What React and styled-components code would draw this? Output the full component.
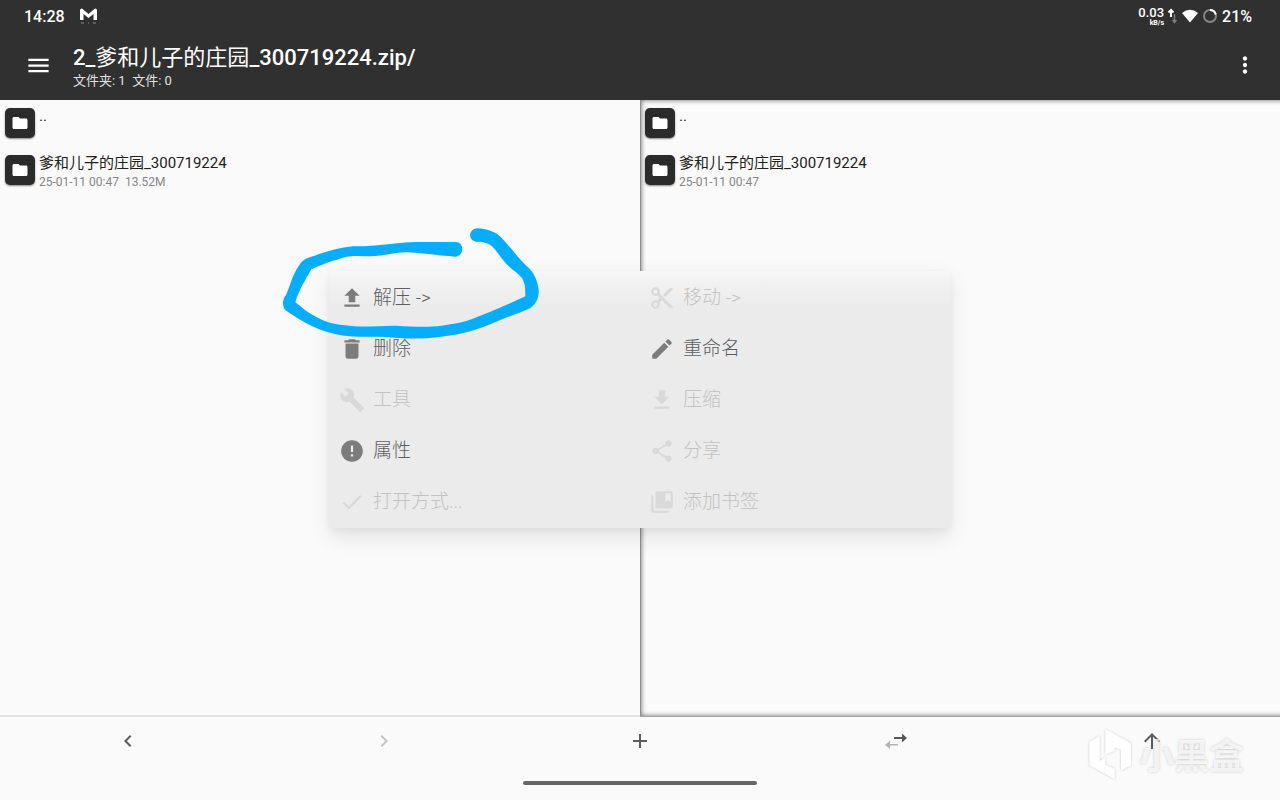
import React from "react";
import styled, { createGlobalStyle } from "styled-components";
import {
  MdAdd,
  MdArrowUpward,
  MdBuild,
  MdCheck,
  MdChevronLeft,
  MdChevronRight,
  MdCollectionsBookmark,
  MdContentCut,
  MdDelete,
  MdEdit,
  MdError,
  MdFolder,
  MdMenu,
  MdMoreVert,
  MdShare,
} from "react-icons/md";

const GlobalStyle = createGlobalStyle`
  *, *::before, *::after { box-sizing: border-box; }
  body {
    margin: 0;
    background: #fafafa;
    font-family: Roboto, "Noto Sans CJK SC", sans-serif;
  }
  button {
    margin: 0;
    padding: 0;
    border: 0;
    background: none;
    color: inherit;
    font: inherit;
    text-align: left;
  }
  svg { display: block; flex: none; }
`;

const Screen = styled.div`
  position: relative;
  display: flex;
  flex-direction: column;
  min-height: 100vh;
  overflow: hidden;
`;

const Header = styled.header`
  background: #303030;
  color: #fff;
`;

const StatusBar = styled.div`
  display: flex;
  align-items: center;
  height: 32px;
  padding: 0 28px 0 24px;
  font-size: 16px;
  font-weight: 500;
`;

const StatusLeft = styled.div`
  display: flex;
  align-items: center;
  gap: 15px;
  flex: 1;
`;

const StatusRight = styled.div`
  display: flex;
  align-items: center;
  gap: 5px;
`;

const Speed = styled.div`
  display: flex;
  align-items: center;
  gap: 3px;
`;

const SpeedText = styled.div`
  display: flex;
  flex-direction: column;
  align-items: flex-end;
  padding-top: 1px;
  font-size: 13px;
  line-height: 12px;
`;

const SpeedUnit = styled.span`
  font-size: 7px;
  line-height: 8px;
  font-weight: 700;
`;

const Toolbar = styled.div`
  display: flex;
  align-items: center;
  height: 68px;
  padding: 0 22px 2px 25px;
`;

const IconButton = styled.button`
  display: grid;
  place-items: center;
`;

const Heading = styled.div`
  flex: 1;
  min-width: 0;
  padding: 4px 0 0 21px;
`;

const Title = styled.h1`
  margin: 0;
  font-size: 22px;
  line-height: 28px;
  font-weight: 400;
  white-space: nowrap;
`;

const Latin = styled.span`
  font-weight: 500;
`;

const Subtitle = styled.p`
  margin: 0;
  font-size: 13px;
  line-height: 18px;
  color: #e0e0e0;
  white-space: pre;
`;

const Panes = styled.main`
  flex: 1;
  display: grid;
  grid-template-columns: 1fr 1fr;
`;

const Pane = styled.ul`
  margin: 0;
  padding: 0;
  list-style: none;
  background: #fafafa;
  border-bottom: 2px solid #e2e2e2;
`;

const ActivePane = styled(Pane)`
  position: relative;
  border-bottom: 1px solid #a2a2a2;
  overflow: hidden;

  &::after {
    content: "";
    position: absolute;
    inset: 0 -8px 0 0;
    border-left: 1px solid #8e8e8e;
    box-shadow: inset 0 0 5px rgba(0, 0, 0, 0.6);
    pointer-events: none;
  }
`;

const FileRow = styled.button`
  display: flex;
  gap: 4px;
  width: 100%;
  height: 47px;
  padding: 5px 0 0 5px;
`;

const FolderBadge = styled.span`
  display: grid;
  place-items: center;
  flex: none;
  width: 30px;
  height: 30px;
  margin-top: 3px;
  border-radius: 5px;
  background: #2b2b2b;
  color: #fff;
  box-shadow: 0 1px 2px rgba(0, 0, 0, 0.45);
`;

const FileText = styled.span`
  display: flex;
  flex-direction: column;
  color: #212121;
  font-size: 15px;
  line-height: 22px;
`;

const FileMeta = styled.span`
  color: #858585;
  font-size: 12px;
  line-height: 16px;
  white-space: pre;
`;

const Footer = styled.footer`
  height: 83px;
`;

const NavBar = styled.nav`
  display: grid;
  grid-template-columns: repeat(5, 1fr);
  height: 48px;
`;

const NavButton = styled(IconButton)`
  color: ${(p) => (p.disabled ? "#c4c4c4" : "#5c5c5c")};
`;

const HomeHandle = styled.div`
  width: 234px;
  height: 4px;
  margin: 16px auto 0;
  border-radius: 2px;
  background: #666;
`;

const Overlay = styled.div`
  position: absolute;
  inset: 0;
  display: grid;
  place-items: center;
  padding-bottom: 2px;
  pointer-events: none;
`;

const Menu = styled.div`
  position: relative;
  display: grid;
  grid-template-columns: 1fr 1fr;
  grid-auto-rows: 51px;
  width: 620px;
  padding-top: 2px;
  background: linear-gradient(#f7f7f7, #f1f1f1 14px, #ebebeb 36px);
  box-shadow: 0 8px 20px rgba(0, 0, 0, 0.1), 0 3px 8px rgba(0, 0, 0, 0.04);
  pointer-events: auto;
`;

const MenuItem = styled.button`
  display: flex;
  align-items: center;
  gap: 8px;
  padding-left: 9px;
  font-size: 19px;
  line-height: 24px;
  font-weight: 300;
  color: ${(p) => (p.disabled ? "#c2c2c2" : "#5e5e5e")};

  svg {
    color: ${(p) => (p.disabled ? "#d9d9d9" : "#7c7c7c")};
  }
`;

const Scribble = styled.svg`
  position: absolute;
  left: -60px;
  top: -51px;
  pointer-events: none;
`;

const Watermark = styled.div`
  position: absolute;
  right: 36px;
  bottom: 20px;
  display: flex;
  align-items: center;
  gap: 7px;
  color: rgba(255, 255, 255, 0.75);
  font-family: "Noto Sans CJK SC", sans-serif;
  font-size: 35px;
  line-height: 50px;
  font-weight: 700;
  text-shadow: 0 0 3px rgba(0, 0, 0, 0.2);
  pointer-events: none;

  svg { filter: drop-shadow(0 0 1px rgba(0, 0, 0, 0.2)); }
`;

const UploadIcon = () => (
  <svg width="26" height="26" viewBox="0 0 24 24" fill="currentColor">
    <path d="M9 16h6v-6h4l-7-7-7 7h4zM5 18h14v2H5z" />
  </svg>
);

const DownloadIcon = () => (
  <svg width="26" height="26" viewBox="0 0 24 24" fill="currentColor">
    <path d="M19 9h-4V3H9v6H5l7 7 7-7zM5 18v2h14v-2H5z" />
  </svg>
);

const SwapIcon = () => (
  <svg width="22" height="16" viewBox="0 0 22 16">
    <path d="M9 4h8V0.500l5 4.500-5 4.500V6H9z" fill="#555" />
    <path d="M13 11H5V7.500L0 12l5 4v-3.500h8z" fill="#b4b4b4" />
  </svg>
);

const MailIcon = () => (
  <svg width="17" height="16" viewBox="0 0 17 16">
    <path d="M0 12V2Q0 0.500 2 0.500L8.500 6 15 0.500Q17 0.500 17 2V12H13.500V6L8.500 10 3.500 6V12Z" fill="#fff" />
    <path d="M1 15h3M8 15h1M13 15h3" stroke="#8c8c8c" />
  </svg>
);

const TrafficIcon = () => (
  <svg width="10" height="16" viewBox="0 0 10 16" fill="none" strokeWidth="1.500">
    <path d="M4 9V2M1.500 4.500L4 2l2.500 2.500" stroke="#fff" strokeWidth="2" />
    <path d="M7.500 6v8M5.500 12l2 2.500 2-2.500" stroke="#7d7d7d" />
  </svg>
);

const WifiIcon = () => (
  <svg width="16" height="14" viewBox="0 0 16 14">
    <path d="M8 13.500L0 4Q8-2.500 16 4Z" fill="#fff" />
  </svg>
);

const BatteryRing = () => (
  <svg width="14" height="14" viewBox="0 0 14 14" fill="none" strokeWidth="2">
    <circle cx="7" cy="7" r="6" stroke="#858585" />
    <path d="M7 1A6 6 0 0 1 12.800 5.500" stroke="#fff" />
  </svg>
);

const BrandMark = () => (
  <svg width="44" height="52" viewBox="0 0 132 156" fill="#fff">
    <path d="M4 42L35 24V98L52 90V110L80 123V154L4 112Z" />
    <path d="M52 3L129 46V112L99 128V66L80 58V68L52 80Z" />
  </svg>
);

const files = {
  left: [{ name: ".." }, { name: "爹和儿子的庄园_300719224", meta: "25-01-11 00:47  13.52M" }],
  right: [{ name: ".." }, { name: "爹和儿子的庄园_300719224", meta: "25-01-11 00:47" }],
};

const menuItems = [
  { label: "解压 ->", icon: <UploadIcon /> },
  { label: "移动 ->", icon: <MdContentCut size={26} />, disabled: true },
  { label: "删除", icon: <MdDelete size={26} /> },
  { label: "重命名", icon: <MdEdit size={26} /> },
  { label: "工具", icon: <MdBuild size={26} />, disabled: true },
  { label: "压缩", icon: <DownloadIcon />, disabled: true },
  { label: "属性", icon: <MdError size={26} /> },
  { label: "分享", icon: <MdShare size={26} />, disabled: true },
  { label: "打开方式...", icon: <MdCheck size={26} />, disabled: true },
  { label: "添加书签", icon: <MdCollectionsBookmark size={26} />, disabled: true },
];

const FileRows = ({ items }) =>
  items.map((file) => (
    <li key={file.name}>
      <FileRow type="button">
        <FolderBadge>
          <MdFolder size={18} />
        </FolderBadge>
        <FileText>
          {file.name}
          {file.meta && <FileMeta>{file.meta}</FileMeta>}
        </FileText>
      </FileRow>
    </li>
  ));

export default function App() {
  return (
    <Screen>
      <GlobalStyle />
      <Header>
        <StatusBar>
          <StatusLeft>
            14:28
            <MailIcon />
          </StatusLeft>
          <StatusRight>
            <Speed>
              <SpeedText>
                0.03
                <SpeedUnit>kB/s</SpeedUnit>
              </SpeedText>
              <TrafficIcon />
            </Speed>
            <WifiIcon />
            <BatteryRing />
            21%
          </StatusRight>
        </StatusBar>
        <Toolbar>
          <IconButton type="button" aria-label="菜单">
            <MdMenu size={27} />
          </IconButton>
          <Heading>
            <Title>
              <Latin>2_</Latin>爹和儿子的庄园<Latin>_300719224.zip/</Latin>
            </Title>
            <Subtitle>{"文件夹: 1  文件: 0"}</Subtitle>
          </Heading>
          <IconButton type="button" aria-label="更多">
            <MdMoreVert size={26} />
          </IconButton>
        </Toolbar>
      </Header>

      <Panes>
        <Pane>
          <FileRows items={files.left} />
        </Pane>
        <ActivePane>
          <FileRows items={files.right} />
        </ActivePane>
      </Panes>

      <Footer>
        <NavBar>
          <NavButton type="button" aria-label="后退">
            <MdChevronLeft size={24} />
          </NavButton>
          <NavButton type="button" aria-label="前进" disabled>
            <MdChevronRight size={24} />
          </NavButton>
          <NavButton type="button" aria-label="新建">
            <MdAdd size={24} />
          </NavButton>
          <NavButton type="button" aria-label="切换">
            <SwapIcon />
          </NavButton>
          <NavButton type="button" aria-label="上一级">
            <MdArrowUpward size={24} />
          </NavButton>
        </NavBar>
        <HomeHandle />
      </Footer>

      <Overlay>
        <Menu>
          {menuItems.map((item) => (
            <MenuItem key={item.label} type="button" disabled={item.disabled}>
              {item.icon}
              {item.label}
            </MenuItem>
          ))}
          <Scribble width="280" height="130" viewBox="0 0 840 390" aria-hidden="true">
            <path
              fill="#04aefd"
              d="M556 66C584 66 584 108 556 110C500 106 450 98 410 97C370 98 340 108 300 109C270 109 250 106 230 110C195 120 155 132 124 148C110 172 86 212 76 247C90 258 105 271 118 279C150 298 180 313 225 316C280 324 330 316 380 317C430 320 475 322 515 317C550 312 580 308 612 295C650 280 710 255 766 229C766 205 766 190 755 173C740 155 718 145 702 124C685 103 675 84 660 74C645 66 635 65 618 65C594 62 594 28 622 25C650 26 675 35 692 51C715 74 745 115 777 145C794 162 803 185 806 210C807 232 800 252 780 265C745 281 700 295 662 312C610 335 550 347 500 352C440 360 390 353 330 350C280 350 235 352 195 342C130 328 88 298 45 270C36 255 37 238 48 225C62 195 65 168 88 135C98 118 115 112 132 108C165 95 215 82 250 79C320 80 380 67 440 66Z"
            />
          </Scribble>
        </Menu>
      </Overlay>

      <Watermark>
        <BrandMark />
        小黑盒
      </Watermark>
    </Screen>
  );
}
